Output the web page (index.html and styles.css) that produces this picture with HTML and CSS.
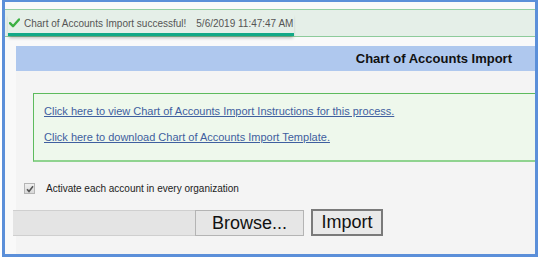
FILE: index.html
```html
<!DOCTYPE html>
<html>
<head>
<meta charset="utf-8">
<link rel="stylesheet" href="styles.css">
</head>
<body>
<div class="frame">
  <div class="success">
    <span class="msg">
      <svg class="check" width="11" height="10" viewBox="0 0 11 10"><path d="M1 5.2 L4 8.2 L10 1.5" fill="none" stroke="#3cb043" stroke-width="2.4" stroke-linecap="round" stroke-linejoin="round"/></svg>
      <span class="msg-text">Chart of Accounts Import successful!</span>
      <span class="msg-date">5/6/2019 11:47:47 AM</span>
    </span>
  </div>
  <div class="panel">
    <div class="panel-head">Chart of Accounts Import</div>
    <div class="panel-body">
      <div class="linkbox">
        <a class="link" href="#">Click here to view Chart of Accounts Import Instructions for this process.</a>
        <a class="link" href="#">Click here to download Chart of Accounts Import Template.</a>
      </div>
      <label class="opt">
        <span class="cb"><svg width="8" height="8" viewBox="0 0 8 8"><path d="M1 4.2 L3 6.4 L7 1.2" fill="none" stroke="#555" stroke-width="1.6"/></svg></span>
        <span>Activate each account in every organization</span>
      </label>
      <div class="filerow">
        <span class="filefield"></span>
        <span class="btn browse">Browse...</span>
        <span class="btn import">Import</span>
      </div>
    </div>
  </div>
  <div class="foot"></div>
</div>
</body>
</html>
```

FILE: styles.css
```css
html, body {
  margin: 0;
  padding: 0;
  background: #ffffff;
  font-family: "Liberation Sans", Arial, sans-serif;
}
.frame {
  margin: 0 3px 3px 2px;
  height: 252px;
  border: 3px solid #5b8fd9;
  border-top-width: 2px;
  background: #f9f9f9;
  display: flex;
  flex-direction: column;
  overflow: hidden;
}
.success {
  margin-top: 7px;
  height: 28px;
  background: #e5efe8;
  border-top: 1px solid #93cfa2;
  border-bottom: 1px solid #8dcb9b;
  padding-left: 3px;
  display: flex;
  align-items: flex-start;
}
.msg {
  display: inline-flex;
  align-items: center;
  height: 20px;
  margin-top: 3px;
  padding: 0 1px 0 1px;
  border-bottom: 3px solid #13a987;
  box-shadow: 0 3px 3px -1px rgba(0,0,0,0.25);
  font-size: 10px;
  color: #555;
}
.check { margin-right: 4px; }
.msg-date { margin-left: 10px; }
.panel {
  margin: 9px 0 0 11px;
  display: flex;
  flex-direction: column;
}
.panel-head {
  height: 25px;
  background: #afc8ee;
  display: flex;
  align-items: center;
  justify-content: flex-end;
  padding-right: 23px;
  font-size: 13px;
  font-weight: bold;
  color: #111;
}
.panel-body {
  background: #f4f4f4;
  padding: 22px 0 0 0;
  height: 166px;
  display: flex;
  flex-direction: column;
}
.linkbox {
  margin-left: 17px;
  height: 55px;
  background: #eef8ec;
  border: 1px solid #5dbb5d;
  border-right: none;
  border-bottom: 2px solid #8fd38f;
  padding: 11px 0 0 10px;
  display: flex;
  flex-direction: column;
  gap: 14px;
}
.link {
  font-size: 11px;
  color: #3f5f9f;
  text-decoration: underline;
  line-height: 12px;
}
.opt {
  margin: 21px 0 0 8px;
  display: flex;
  align-items: center;
  font-size: 10px;
  color: #222;
}
.cb {
  width: 9px;
  height: 9px;
  border: 1px solid #b5b5b5;
  background: linear-gradient(#f0f0f0, #d8d8d8);
  display: inline-flex;
  align-items: center;
  justify-content: center;
  margin-right: 11px;
}
.filerow {
  margin: 15px 0 0 -3px;
  display: flex;
  align-items: flex-end;
}
.filefield {
  width: 182px;
  height: 24px;
  background: #e4e4e4;
  border-top: 1px solid #cfcfcf;
  border-bottom: 1px solid #cfcfcf;
}
.btn {
  display: inline-flex;
  align-items: center;
  justify-content: center;
  font-size: 18px;
  color: #111;
  background: #e6e6e6;
  box-sizing: border-box;
}
.browse {
  width: 109px;
  height: 26px;
  border: 1px solid #b4b4b4;
}
.import {
  margin-left: 7px;
  width: 72px;
  height: 27px;
  border: 2px solid #7a7a7a;
  background: #e9e9e9;
}
.foot {
  flex: 1;
  background: linear-gradient(#f2f2f2, #ffffff);
}
```
